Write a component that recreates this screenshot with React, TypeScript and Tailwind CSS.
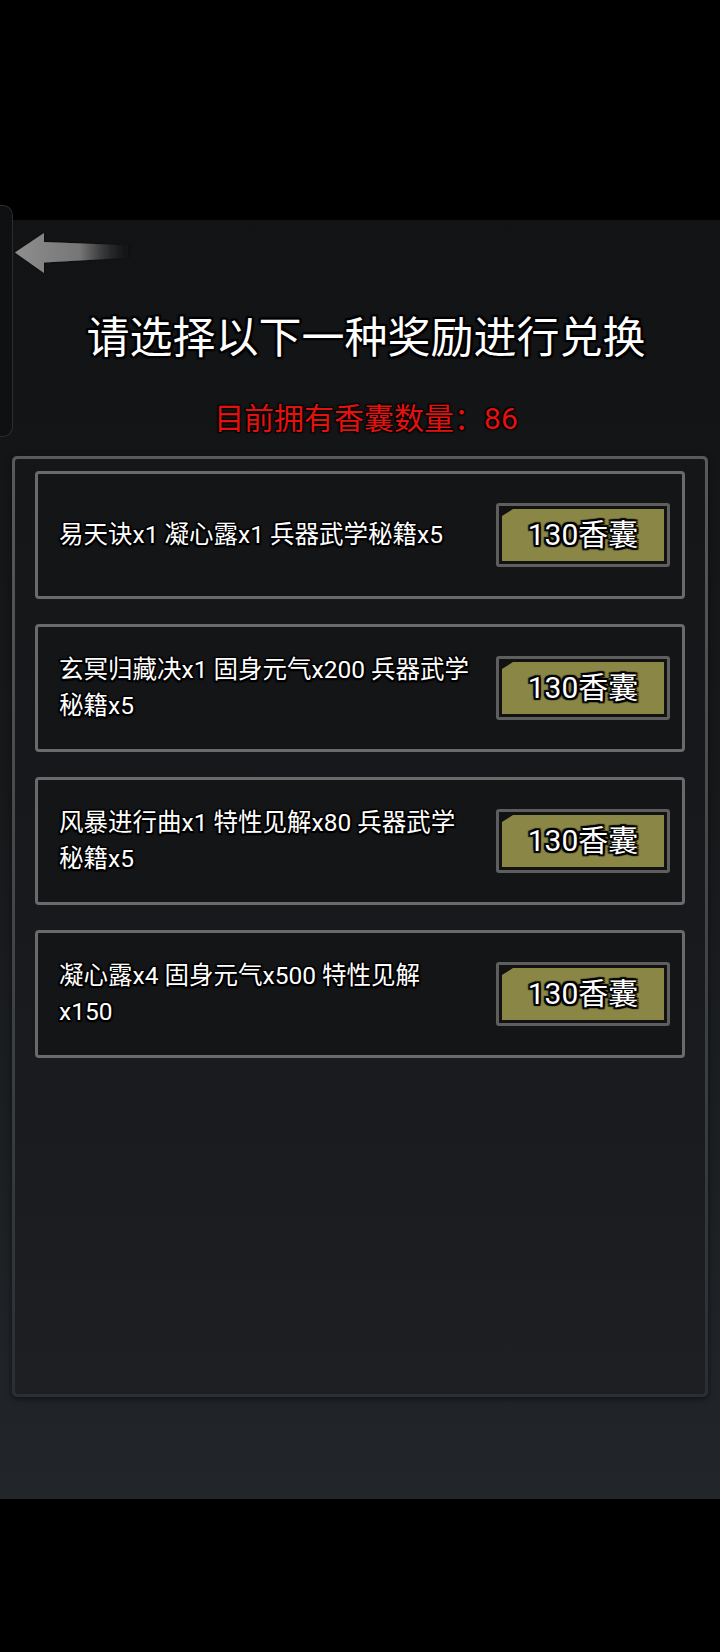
import React from "react";

const items: string[][] = [
  ["易天诀x1 凝心露x1 兵器武学秘籍x5"],
  ["玄冥归藏决x1 固身元气x200 兵器武学", "秘籍x5"],
  ["风暴进行曲x1 特性见解x80 兵器武学", "秘籍x5"],
  ["凝心露x4 固身元气x500 特性见解", "x150"],
];

function Arrow() {
  return (
    <svg width="122" height="42" viewBox="0 0 122 42">
      <defs>
        <linearGradient id="ag" x1="0" y1="0" x2="1" y2="0">
          <stop offset="0" stopColor="#8e8e8e" />
          <stop offset="0.55" stopColor="#767676" />
          <stop offset="1" stopColor="#1a1b1d" stopOpacity="0" />
        </linearGradient>
        <filter id="as" x="-10%" y="-20%" width="120%" height="140%">
          <feDropShadow dx="0" dy="0" stdDeviation="1.2" floodColor="#000" floodOpacity="0.9" />
        </filter>
      </defs>
      <polygon
        points="1,20.5 30,1 30,10 119,13.5 119,25.5 30,30.5 30,41"
        fill="url(#ag)"
        filter="url(#as)"
      />
    </svg>
  );
}

const outline =
  "[text-shadow:-2px_-2px_1px_#000,2px_-2px_1px_#000,-2px_2px_1px_#000,2px_2px_1px_#000,0_2px_1px_#000,0_-2px_1px_#000,2px_0_1px_#000,-2px_0_1px_#000]";

export default function App() {
  return (
    <div className="relative w-[720px] h-[1652px] bg-black overflow-hidden font-['Roboto','Noto_Sans_CJK_SC',sans-serif]">
      <div className="h-[220px]" />
      <div className="h-[1279px] flex flex-col bg-[linear-gradient(180deg,#121315_0%,#16181a_45%,#22262a_100%)]">
        <div className="mt-[12px] ml-[14px] h-[42px]">
          <Arrow />
        </div>
        <h1
          className={`mt-[38px] pl-[12px] text-center text-[43px] leading-[52px] text-white font-normal ${outline}`}
        >
          请选择以下一种奖励进行兑换
        </h1>
        <p className="mt-[37px] pl-[12px] text-center text-[30px] leading-[36px] text-[#e3120f] [text-shadow:-1px_-1px_1px_#000,1px_-1px_1px_#000,-1px_1px_1px_#000,1px_1px_1px_#000,0_0_3px_#300]">
          目前拥有香囊数量：86
        </p>
        <div className="mt-[19px] mx-[12px] h-[941px] rounded-[5px] p-[3px] bg-[linear-gradient(180deg,#58595c_0%,#404245_55%,#2b2e32_100%)] shadow-[0_2px_6px_rgba(0,0,0,0.5)]">
          <div className="h-full rounded-[3px] bg-[linear-gradient(180deg,#151618_0%,#18191c_50%,#1d1f22_100%)] px-[20px] pt-[12px] flex flex-col gap-[25px]">
            {items.map((lines, i) => (
              <div
                key={i}
                className="h-[128px] shrink-0 rounded-[4px] border-[3px] border-[#6a6a6a] bg-[#141517] flex items-center justify-between pl-[21px] pr-[12px]"
              >
                <div className="text-[24.5px] leading-[36px] text-white [text-shadow:-1.5px_-1.5px_1px_#000,1.5px_-1.5px_1px_#000,-1.5px_1.5px_1px_#000,1.5px_1.5px_1px_#000,0_1.5px_1px_#000,0_-1.5px_1px_#000,1.5px_0_1px_#000,-1.5px_0_1px_#000]">
                  {lines.map((l, j) => (
                    <div key={j} className="whitespace-nowrap">
                      {l}
                    </div>
                  ))}
                </div>
                <div className="w-[174px] h-[64px] shrink-0 rounded-[3px] border-[3px] border-[#5e5e5e] bg-[#121212] p-[3px]">
                  <div
                    className={`h-full bg-[#8a8746] [clip-path:polygon(11px_0,100%_0,100%_100%,0_100%,0_7px)] flex items-center justify-center text-[30px] leading-none text-white ${outline}`}
                  >
                    130香囊
                  </div>
                </div>
              </div>
            ))}
          </div>
        </div>
      </div>
      <div className="absolute left-0 top-[205px] w-[13px] h-[232px] rounded-r-[10px] border border-l-0 border-[#2c2d2f] bg-[#0f1012]" />
    </div>
  );
}
